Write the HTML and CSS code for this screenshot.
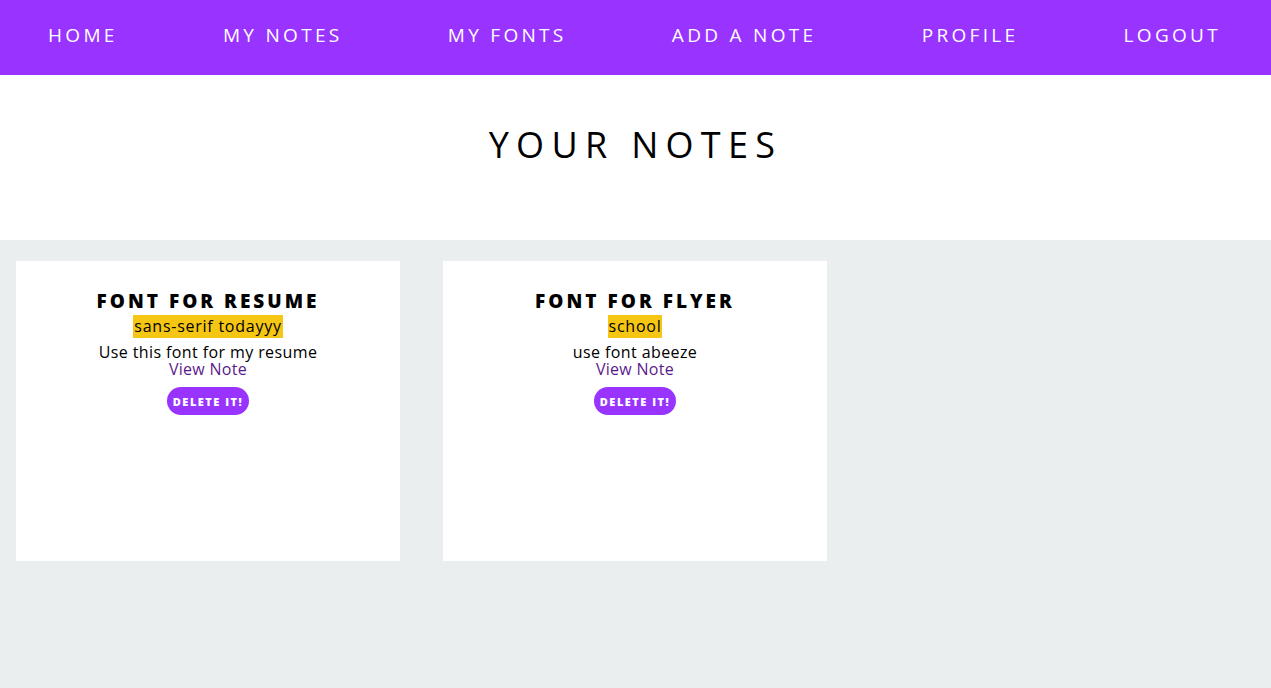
FILE: index.html
```html
<!DOCTYPE html>
<html lang="en">
<head>
<meta charset="utf-8">
<title>Your Notes</title>
<link rel="stylesheet" href="styles.css">
</head>
<body>
<nav class="nav">
  <a class="nav-link" href="#">HOME</a>
  <a class="nav-link" href="#">MY NOTES</a>
  <a class="nav-link" href="#">MY FONTS</a>
  <a class="nav-link" href="#">ADD A NOTE</a>
  <a class="nav-link" href="#">PROFILE</a>
  <a class="nav-link" href="#">LOGOUT</a>
</nav>
<header class="page-head">
  <h1 class="page-title">YOUR NOTES</h1>
</header>
<main class="notes">
  <section class="card">
    <h2 class="card-title">FONT FOR RESUME</h2>
    <div class="card-font"><span class="tag">sans-serif todayyy</span></div>
    <p class="card-body">Use this font for my resume</p>
    <a class="card-link" href="#">View Note</a>
    <button class="delete-btn">DELETE IT!</button>
  </section>
  <section class="card">
    <h2 class="card-title">FONT FOR FLYER</h2>
    <div class="card-font"><span class="tag">school</span></div>
    <p class="card-body">use font abeeze</p>
    <a class="card-link" href="#">View Note</a>
    <button class="delete-btn">DELETE IT!</button>
  </section>
</main>
</body>
</html>
```
FILE: styles.css
```css
* { box-sizing: border-box; }
html, body { margin: 0; padding: 0; height: 100%; }
body {
  font-family: "Open Sans", "Noto Sans", sans-serif;
  background: #eaeeef;
  color: #000;
  display: flex;
  flex-direction: column;
}
.nav {
  background: #9933ff;
  height: 75px;
  display: flex;
  justify-content: space-between;
  align-items: center;
  padding: 0 50px 6px 48px;
}
.nav-link {
  color: #fff;
  text-decoration: none;
  font-size: 19px;
  letter-spacing: 3.3px;
  font-weight: 400;
}
.page-head {
  background: #fff;
  height: 165px;
  display: flex;
  justify-content: center;
  padding-top: 43px;
}
.page-title {
  margin: 0;
  font-size: 36px;
  font-weight: 400;
  letter-spacing: 7.3px;
  line-height: 1.5;
}
.notes {
  flex: 1;
  display: flex;
  align-items: flex-start;
  gap: 43px;
  padding: 21px 16px;
}
.card {
  width: 384px;
  height: 300px;
  background: #fff;
  display: flex;
  flex-direction: column;
  align-items: center;
  padding-top: 26px;
}
.card-title {
  margin: 0;
  font-size: 19px;
  font-weight: 800;
  letter-spacing: 3px;
  line-height: 28px;
}
.card-font { margin-top: 0; line-height: 23px; }
.tag {
  background: #f6c614;
  font-size: 16px;
  letter-spacing: 0.75px;
  display: inline-block;
  line-height: 23px;
  padding: 0 1px;
}
.card-body {
  margin: 6px 0 0;
  font-size: 16px;
  letter-spacing: 0.4px;
  line-height: 17px;
}
.card-link {
  display: block;
  color: #5b1a8c;
  text-decoration: none;
  font-size: 16px;
  letter-spacing: 0.3px;
  line-height: 16px;
}
.delete-btn {
  margin-top: 10px;
  background: #9933ff;
  color: #fff;
  border: none;
  border-radius: 14px;
  height: 28px;
  padding: 0 6px;
  font-family: inherit;
  font-size: 11px;
  font-weight: 800;
  letter-spacing: 1.5px;
}
```
